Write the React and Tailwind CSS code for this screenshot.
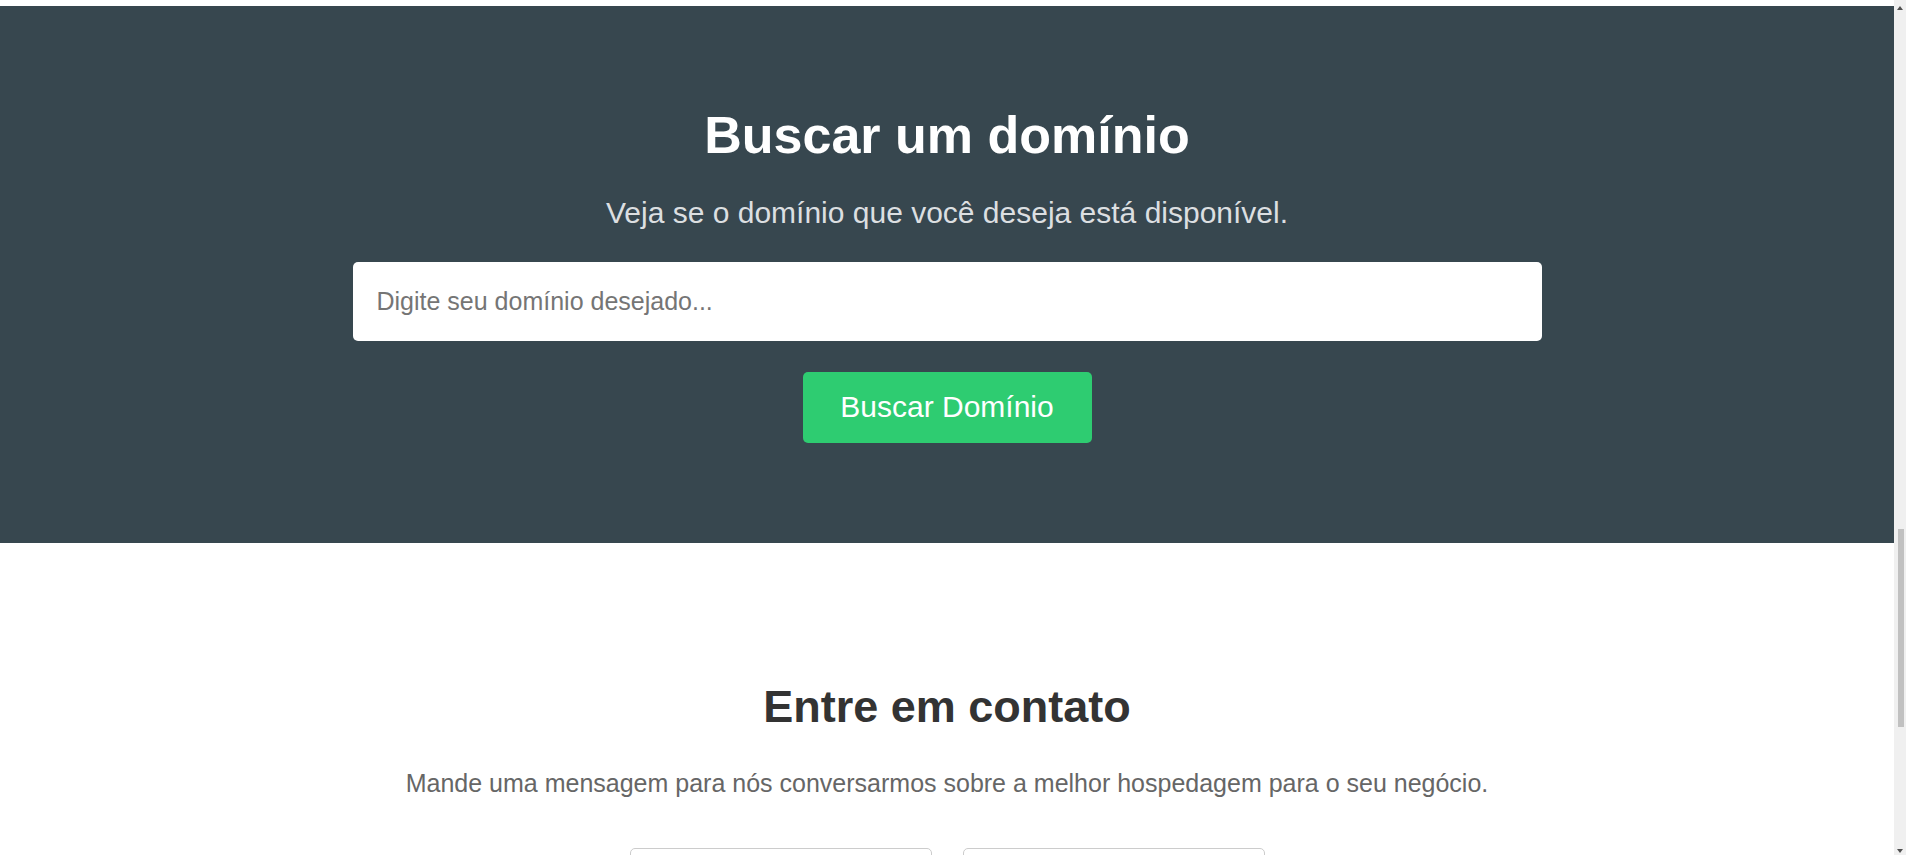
import { useState } from "react";

export default function App() {
  const [dominio, setDominio] = useState("");

  return (
    <div className="flex h-[855px] overflow-hidden bg-white font-['Liberation_Sans',Arial,sans-serif]">
      {/* Conteúdo da página */}
      <div className="flex-1 flex flex-col overflow-hidden">
        <div className="h-[6px] shrink-0 bg-white" />

        {/* Busca de domínio */}
        <section className="shrink-0 bg-[#37474f] pt-[103px] pb-[100px] flex flex-col items-center">
          <h1 className="text-[52px] leading-none font-bold text-white">Buscar um domínio</h1>
          <p className="mt-[37px] text-[30px] leading-none text-[#dcdfe1]">
            Veja se o domínio que você deseja está disponível.
          </p>
          <input
            type="text"
            value={dominio}
            onChange={(e) => setDominio(e.target.value)}
            placeholder="Digite seu domínio desejado..."
            className="mt-[34px] w-[1189px] h-[79px] px-[24px] bg-white rounded-[5px] text-[25px] text-[#333] placeholder:text-[#757575] focus:outline-none"
          />
          <button
            type="button"
            className="mt-[31px] w-[289px] pt-[20px] pb-[21px] bg-[#2ecc71] rounded-[5px] text-[30px] leading-none text-white"
          >
            Buscar Domínio
          </button>
        </section>

        {/* Contato */}
        <section className="shrink-0 flex flex-col items-center pt-[141px]">
          <h2 className="text-[45px] leading-none font-bold text-[#333]">Entre em contato</h2>
          <p className="mt-[42px] text-[25px] leading-none text-[#666]">
            Mande uma mensagem para nós conversarmos sobre a melhor hospedagem para o seu negócio.
          </p>
          <div className="mt-[52px] flex gap-[31px]">
            <div className="w-[302px] h-[50px] border border-[#ccc] rounded-[5px]" />
            <div className="w-[302px] h-[50px] border border-[#ccc] rounded-[5px]" />
          </div>
        </section>
      </div>

      {/* Barra de rolagem */}
      <div className="w-[12px] shrink-0 bg-[#f0f0f0] flex flex-col items-center">
        <div className="mt-[6px] w-0 h-0 border-l-[3px] border-r-[3px] border-b-[4px] border-l-transparent border-r-transparent border-b-[#505050]" />
        <div className="mt-[519px] ml-[2px] w-[6px] h-[198px] bg-[#c1c1c1]" />
        <div className="mt-auto mb-[2px] w-0 h-0 border-l-[3px] border-r-[3px] border-t-[4px] border-l-transparent border-r-transparent border-t-[#505050]" />
      </div>
    </div>
  );
}
